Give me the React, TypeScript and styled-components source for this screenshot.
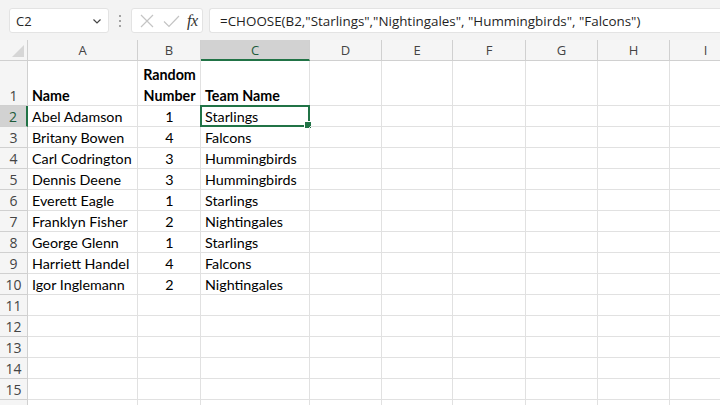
import React from 'react';
import styled, { createGlobalStyle, css } from 'styled-components';

const GREEN = '#217346';
const GRID = '#e1e1e1';
const HEAD_LINE = '#d0d0d0';

const GlobalStyle = createGlobalStyle`
	html, body {
		margin: 0;
		padding: 0;
		background: #ffffff;
		overflow: hidden;
	}
	* {
		box-sizing: border-box;
	}
`;

const Page = styled.div`
	width: 720px;
	height: 405px;
	overflow: hidden;
	background: #ffffff;
	font-family: 'Open Sans', 'Noto Sans', sans-serif;
`;

const Toolbar = styled.div`
	height: 40px;
	background: #f3f3f3;
	display: flex;
	align-items: flex-start;
	padding: 8px 0 0 9px;
`;

const NameBox = styled.div`
	width: 100px;
	height: 25px;
	background: #ffffff;
	border: 1px solid #e3e3e3;
	border-radius: 3px;
	display: flex;
	align-items: center;
	justify-content: space-between;
	padding: 0 6px 0 6px;
	font-size: 13px;
	color: #262626;
`;

const Dots = styled.div`
	width: 22px;
	height: 25px;
	display: flex;
	align-items: center;
	justify-content: center;
`;

const IconBox = styled.div`
	width: 72px;
	height: 25px;
	background: #ffffff;
	border: 1px solid #e3e3e3;
	border-radius: 3px;
	display: flex;
	align-items: center;
	padding: 0 0 0 5px;
	gap: 4px;
`;

const Fx = styled.span`
	font-family: 'Liberation Serif', serif;
	font-style: italic;
	font-size: 16px;
	color: #333333;
	margin-left: 2px;
	letter-spacing: -0.5px;
`;

const FormulaBox = styled.div`
	flex: 1;
	margin-left: 6px;
	height: 25px;
	background: #ffffff;
	border: 1px solid #e3e3e3;
	border-right: none;
	border-radius: 3px 0 0 3px;
	display: flex;
	align-items: center;
	padding-left: 10px;
	font-size: 13.4px;
	color: #1f1f1f;
	white-space: nowrap;
`;

const Sheet = styled.div`
	display: grid;
	grid-template-columns: 28px 110px 63px 109px 72px 71px 73px 72px 72px 72px;
	grid-template-rows: 21px 45px repeat(16, 21px);
	width: 742px;
`;

const ColHead = styled.div<{ $sel?: boolean }>`
	background: #f5f5f5;
	border-right: 1px solid ${HEAD_LINE};
	border-bottom: 1px solid ${HEAD_LINE};
	display: flex;
	align-items: center;
	justify-content: center;
	font-size: 13px;
	color: #444444;
	${(p) =>
		p.$sel &&
		css`
			background: #d2d2d2;
			color: #1e5c3b;
			border-bottom: 2px solid ${GREEN};
		`}
`;

const Corner = styled.div`
	background: #f5f5f5;
	border-right: 1px solid ${HEAD_LINE};
	border-bottom: 1px solid ${HEAD_LINE};
	display: flex;
	align-items: flex-end;
	justify-content: flex-end;
	padding: 0 3px 3px 0;
`;

const RowHead = styled.div<{ $sel?: boolean; $tall?: boolean }>`
	background: #f5f5f5;
	border-right: 1px solid ${HEAD_LINE};
	border-bottom: 1px solid ${HEAD_LINE};
	display: flex;
	align-items: ${(p) => (p.$tall ? 'flex-end' : 'center')};
	justify-content: center;
	font-size: 14px;
	color: #444444;
	${(p) =>
		p.$sel &&
		css`
			background: #d2d2d2;
			color: #1e5c3b;
			border-right: 2px solid ${GREEN};
		`}
`;

const Cell = styled.div<{ $bold?: boolean; $center?: boolean; $tall?: boolean }>`
	position: relative;
	border-right: 1px solid ${GRID};
	border-bottom: 1px solid ${GRID};
	display: flex;
	flex-direction: column;
	justify-content: ${(p) => (p.$tall ? 'flex-end' : 'center')};
	align-items: ${(p) => (p.$center ? 'center' : 'flex-start')};
	text-align: ${(p) => (p.$center ? 'center' : 'left')};
	padding: ${(p) => (p.$tall ? '0 3px 0 4px' : '1px 3px 0 4px')};
	font-family: 'Lato', 'Carlito', sans-serif;
	font-size: 14.3px;
	line-height: 21px;
	font-weight: ${(p) => (p.$bold ? 700 : 400)};
	color: #000000;
	white-space: nowrap;

	& > span:last-of-type {
		margin-bottom: ${(p) => (p.$tall ? '-1px' : '0')};
	}
`;

const Line = styled.span`
	display: block;
`;

const Selection = styled.div`
	position: absolute;
	left: -1px;
	top: -1px;
	right: -1px;
	bottom: -1px;
	border: 2px solid ${GREEN};
	pointer-events: none;

	&::after {
		content: '';
		position: absolute;
		right: -4px;
		bottom: -4px;
		width: 6px;
		height: 6px;
		background: ${GREEN};
		border: 1px solid #ffffff;
	}
`;

const columns = ['A', 'B', 'C', 'D', 'E', 'F', 'G', 'H', 'I'];

const data: [string, number, string][] = [
	['Abel Adamson', 1, 'Starlings'],
	['Britany Bowen', 4, 'Falcons'],
	['Carl Codrington', 3, 'Hummingbirds'],
	['Dennis Deene', 3, 'Hummingbirds'],
	['Everett Eagle', 1, 'Starlings'],
	['Franklyn Fisher', 2, 'Nightingales'],
	['George Glenn', 1, 'Starlings'],
	['Harriett Handel', 4, 'Falcons'],
	['Igor Inglemann', 2, 'Nightingales'],
];

const Chevron = () => (
	<svg width="10" height="10" viewBox="0 0 10 10">
		<path d="M1.5 3.5 L5 7 L8.5 3.5" fill="none" stroke="#444" strokeWidth="1.2" />
	</svg>
);

const VDots = () => (
	<svg width="4" height="14" viewBox="0 0 4 14">
		<circle cx="2" cy="2" r="1" fill="#888" />
		<circle cx="2" cy="7" r="1" fill="#888" />
		<circle cx="2" cy="12" r="1" fill="#888" />
	</svg>
);

const Cross = () => (
	<svg width="20" height="16" viewBox="0 0 20 16">
		<path d="M4 2 L16 14 M16 2 L4 14" stroke="#c4c4c4" strokeWidth="1.2" fill="none" />
	</svg>
);

const Check = () => (
	<svg width="20" height="16" viewBox="0 0 20 16">
		<path d="M3 8.5 L8 13.5 L18 3" stroke="#c4c4c4" strokeWidth="1.2" fill="none" />
	</svg>
);

const CornerMark = () => (
	<svg width="12" height="12" viewBox="0 0 12 12">
		<path d="M12 0 L12 12 L0 12 Z" fill="#d6d6d6" />
	</svg>
);

// row 16 only peeks in at the bottom edge, so its number stays hidden
const VISIBLE_ROWS = 15;

const App = () => {
	const rows = [];
	for (let r = 1; r <= VISIBLE_ROWS + 1; r++) {
		const tall = r === 1;
		let a = '';
		let b = '';
		let c = '';
		if (r === 1) {
			a = 'Name';
			c = 'Team Name';
		} else if (r - 2 < data.length) {
			const d = data[r - 2];
			a = d[0];
			b = String(d[1]);
			c = d[2];
		}
		rows.push(
			<React.Fragment key={r}>
				<RowHead $sel={r === 2} $tall={tall}>
					{r <= VISIBLE_ROWS ? r : ''}
				</RowHead>
				<Cell $bold={tall} $tall={tall}>
					<Line>{a}</Line>
				</Cell>
				<Cell $bold={tall} $tall={tall} $center>
					{tall ? (
						<>
							<Line>Random</Line>
							<Line>Number</Line>
						</>
					) : (
						<Line>{b}</Line>
					)}
				</Cell>
				<Cell $bold={tall} $tall={tall}>
					<Line>{c}</Line>
					{r === 2 && <Selection />}
				</Cell>
				{columns.slice(3).map((col) => (
					<Cell key={col} />
				))}
			</React.Fragment>
		);
	}

	return (
		<Page>
			<GlobalStyle />
			<Toolbar>
				<NameBox>
					<span>C2</span>
					<Chevron />
				</NameBox>
				<Dots>
					<VDots />
				</Dots>
				<IconBox>
					<Cross />
					<Check />
					<Fx>fx</Fx>
				</IconBox>
				<FormulaBox>
					=CHOOSE(B2,"Starlings","Nightingales", "Hummingbirds", "Falcons")
				</FormulaBox>
			</Toolbar>
			<Sheet>
				<Corner>
					<CornerMark />
				</Corner>
				{columns.map((col) => (
					<ColHead key={col} $sel={col === 'C'}>
						{col}
					</ColHead>
				))}
				{rows}
			</Sheet>
		</Page>
	);
};

export default App;
